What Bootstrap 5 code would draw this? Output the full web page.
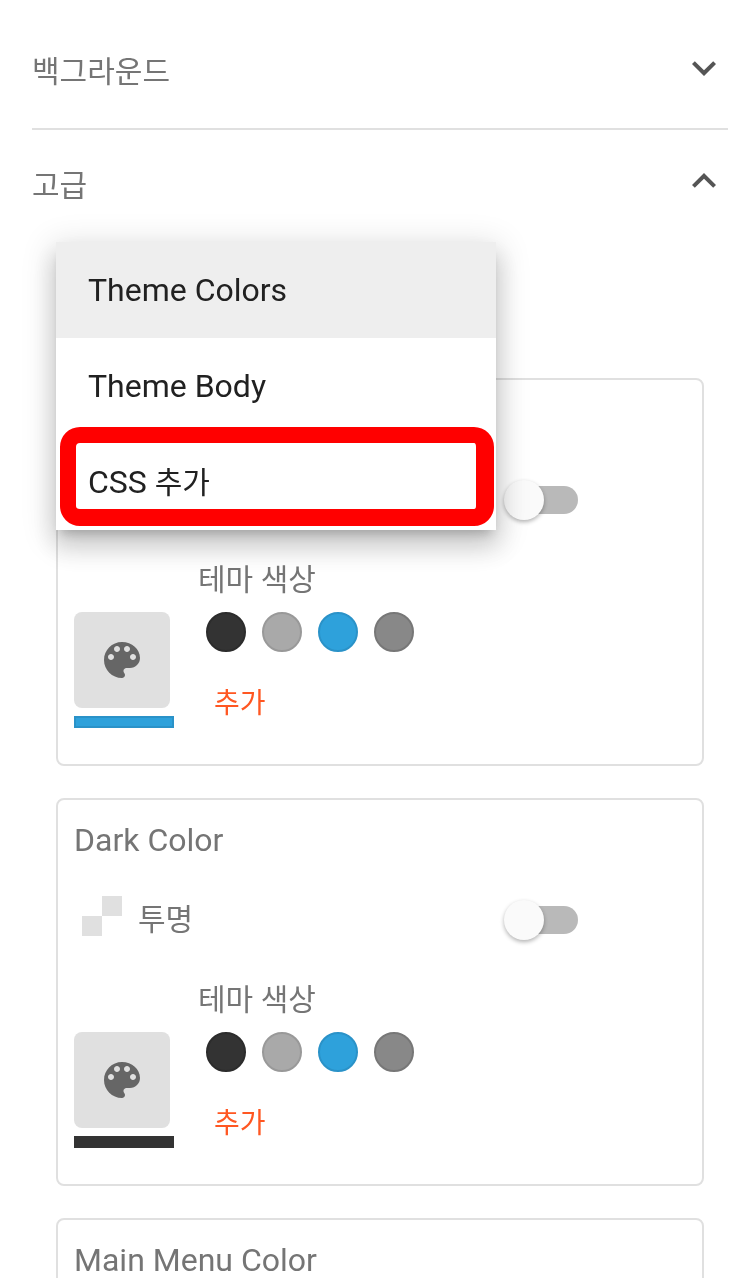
<!DOCTYPE html>
<html lang="ko">
<head>
<meta charset="utf-8">
<title>고급</title>
<link rel="stylesheet" href="https://cdn.jsdelivr.net/npm/bootstrap@5.3.0/dist/css/bootstrap.min.css">
<style>
html,body{height:100%;overflow:hidden;background:#fff}
body{font-family:Roboto,"Noto Sans CJK KR",sans-serif;font-size:32px;line-height:40px;color:#757575}
.pane{padding:6px 28px 0 32px;will-change:transform}
.sec-head{height:124px;padding-top:38px;border-bottom:2px solid #e0e0e0;align-items:flex-start}
.sec-head.open{height:auto;padding-top:27px;border-bottom:0}
.sec-title{display:block;height:48px;font-size:30px;line-height:48px;color:#757575;padding-top:4px}
.sec-head.open .sec-title{padding-top:5px}
.chev{width:48px;height:48px;fill:#555;flex:none}
.advanced{position:relative;margin-left:-32px;margin-right:-28px;padding:173px 52px 0 56px}
.flyout.dropdown-menu{display:block;position:absolute;left:56px;top:37px;width:440px;padding:0;margin:0;border:0;border-radius:0;background:#fff;z-index:5;box-shadow:0 8px 10px -5px rgba(0,0,0,.2),0 16px 24px 2px rgba(0,0,0,.14),0 6px 30px 5px rgba(0,0,0,.12)}
.flyout .dropdown-item{height:96px;padding:28px 32px;font-size:32px;line-height:40px;color:#212121}
.flyout .dropdown-item.active{background:#eee;color:#212121}
.flyout .ko{font-size:30px}
.callout{position:absolute;left:4px;top:185px;width:434px;height:99px;border:16px solid #f00;border-right-width:18px;border-bottom-width:17px;border-radius:20px;pointer-events:none}
.theme-card.card{height:388px;margin-bottom:32px;padding:20px 16px 36px;border:2px solid #e0e0e0;border-radius:8px;color:#757575;font-size:32px;line-height:40px}
.card-name{height:40px}
.trans-row{width:504px;height:44px;margin-top:36px}
.checker{width:40px;height:40px;margin-left:8px;margin-right:16px;background:conic-gradient(#e0e0e0 25%,#fff 0 50%,#e0e0e0 0 75%,#fff 0);filter:blur(.7px);flex:none;align-self:flex-start}
.trans-label{font-size:30px;padding-top:4px}
.toggle-track{position:relative;width:68px;height:28px;margin-top:4px;border-radius:14px;background:#b9b9b9}
.toggle-knob{position:absolute;left:-6px;top:-6px;width:40px;height:40px;border-radius:50%;background:#fafafa;box-shadow:0 2px 4px rgba(0,0,0,.3)}
.lower{margin-top:38px}
.swatch-col{width:100px;margin-right:24px;padding-top:54px;flex:none}
.swatch-box{width:96px;height:96px;border-radius:8px;background:#e0e0e0}
.swatch-box svg{width:48px;height:48px;fill:#666}
.swatch-bar{height:12px;margin-top:8px;border:2px solid #333;background:#333}
.swatch-bar.blue{background:#2ea1db;border-color:#2a92c8}
.label-col{font-size:30px}
.label-text{height:40px;padding-top:2px}
.dots{margin-top:14px;margin-left:8px;gap:16px}
.dot-c{width:40px;height:40px;border-radius:50%;border:2px solid}
.c-dark{background:#333;border-color:#2c2c2c}
.c-grey{background:#a9a9a9;border-color:#999}
.c-blue{background:#2ea1db;border-color:#2a92c8}
.c-mid{background:#888;border-color:#777}
.add-link{height:40px;margin-top:30px;margin-left:16px;padding-top:2px;color:#ff5722;font-size:28px}
</style>
</head>
<body>
<div class="pane">
  <div class="sec-head d-flex justify-content-between">
    <span class="sec-title">백그라운드</span>
    <svg class="chev" viewBox="0 0 24 24"><path d="M16.59 8.59L12 13.17 7.41 8.59 6 10l6 6 6-6z"/></svg>
  </div>
  <div class="sec-head open d-flex justify-content-between">
    <span class="sec-title">고급</span>
    <svg class="chev" viewBox="0 0 24 24"><path d="M12 8l-6 6 1.41 1.41L12 10.83l4.59 4.58L18 14z"/></svg>
  </div>
  <div class="advanced">
    <div class="flyout dropdown-menu">
      <a class="dropdown-item active" href="#">Theme Colors</a>
      <a class="dropdown-item" href="#">Theme Body</a>
      <a class="dropdown-item" href="#">CSS <span class="ko">추가</span></a>
      <div class="callout"></div>
    </div>

    <div class="theme-card card">
      <div class="card-name"></div>
      <div class="trans-row d-flex align-items-center">
        <span class="toggle-track ms-auto"><span class="toggle-knob"></span></span>
      </div>
      <div class="lower d-flex">
        <div class="swatch-col">
          <div class="swatch-box d-flex align-items-center justify-content-center"><svg viewBox="0 0 24 24"><path d="M12 3c-4.97 0-9 4.03-9 9s4.03 9 9 9c.83 0 1.5-.67 1.5-1.5 0-.39-.15-.74-.39-1.01-.23-.26-.38-.61-.38-.99 0-.83.67-1.5 1.5-1.5H16c2.76 0 5-2.24 5-5 0-4.42-4.03-8-9-8zm-5.5 9c-.83 0-1.5-.67-1.5-1.5S5.67 9 6.5 9 8 9.67 8 10.5 7.33 12 6.5 12zm3-4C8.67 8 8 7.33 8 6.5S8.67 5 9.5 5s1.5.67 1.5 1.5S10.33 8 9.5 8zm5 0c-.83 0-1.5-.67-1.5-1.5S13.67 5 14.5 5s1.5.67 1.5 1.5S15.33 8 14.5 8zm3 4c-.83 0-1.5-.67-1.5-1.5S16.67 9 17.5 9s1.5.67 1.5 1.5-.67 1.5-1.5 1.5z"/></svg></div>
          <div class="swatch-bar blue"></div>
        </div>
        <div class="label-col">
          <div class="label-text">테마 색상</div>
          <div class="dots d-flex"><span class="dot-c c-dark"></span><span class="dot-c c-grey"></span><span class="dot-c c-blue"></span><span class="dot-c c-mid"></span></div>
          <div class="add-link">추가</div>
        </div>
      </div>
    </div>

    <div class="theme-card card">
      <div class="card-name">Dark Color</div>
      <div class="trans-row d-flex align-items-center">
        <span class="checker"></span><span class="trans-label">투명</span>
        <span class="toggle-track ms-auto"><span class="toggle-knob"></span></span>
      </div>
      <div class="lower d-flex">
        <div class="swatch-col">
          <div class="swatch-box d-flex align-items-center justify-content-center"><svg viewBox="0 0 24 24"><path d="M12 3c-4.97 0-9 4.03-9 9s4.03 9 9 9c.83 0 1.5-.67 1.5-1.5 0-.39-.15-.74-.39-1.01-.23-.26-.38-.61-.38-.99 0-.83.67-1.5 1.5-1.5H16c2.76 0 5-2.24 5-5 0-4.42-4.03-8-9-8zm-5.5 9c-.83 0-1.5-.67-1.5-1.5S5.67 9 6.5 9 8 9.67 8 10.5 7.33 12 6.5 12zm3-4C8.67 8 8 7.33 8 6.5S8.67 5 9.5 5s1.5.67 1.5 1.5S10.33 8 9.5 8zm5 0c-.83 0-1.5-.67-1.5-1.5S13.67 5 14.5 5s1.5.67 1.5 1.5S15.33 8 14.5 8zm3 4c-.83 0-1.5-.67-1.5-1.5S16.67 9 17.5 9s1.5.67 1.5 1.5-.67 1.5-1.5 1.5z"/></svg></div>
          <div class="swatch-bar"></div>
        </div>
        <div class="label-col">
          <div class="label-text">테마 색상</div>
          <div class="dots d-flex"><span class="dot-c c-dark"></span><span class="dot-c c-grey"></span><span class="dot-c c-blue"></span><span class="dot-c c-mid"></span></div>
          <div class="add-link">추가</div>
        </div>
      </div>
    </div>

    <div class="theme-card card">
      <div class="card-name">Main Menu Color</div>
    </div>
  </div>
</div>
<script src="https://cdn.jsdelivr.net/npm/bootstrap@5.3.0/dist/js/bootstrap.bundle.min.js"></script>
</body>
</html>
